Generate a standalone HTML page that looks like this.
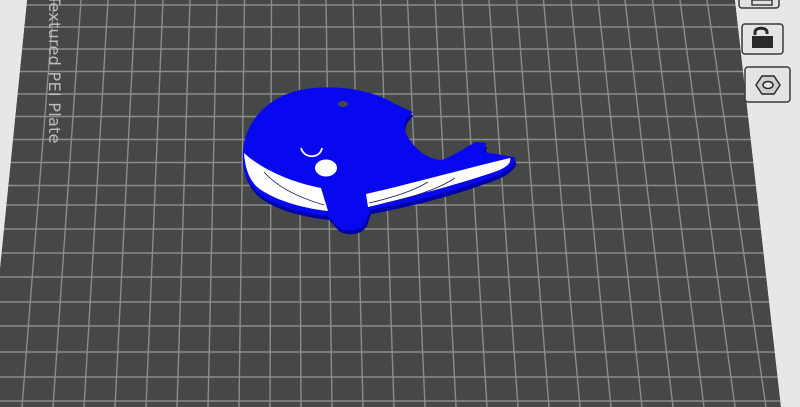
<!DOCTYPE html>
<html><head><meta charset="utf-8"><style>
html,body{margin:0;padding:0;background:#e6e6e6;width:800px;height:407px;overflow:hidden}
svg{position:absolute;left:0;top:0}
</style></head><body>
<svg width="800" height="407" viewBox="0 0 800 407" xmlns="http://www.w3.org/2000/svg">
<defs>
<path id="wb" d="M243,160 C241,125 265,98 300,90 C330,84 370,88 395,104 L413,112 C406,117 403,124 405,131 C412,148 428,160 442,160 C455,155 466,147 476,142 L486,143 L484,152 L514,157 C518,160 512,168 500,174 C460,190 410,203 370,210 L366,222 C360,232 345,232 338,227 L328,216 C300,213 270,205 255,190 C246,180 243,170 243,160 Z"/>
</defs>
<rect width="800" height="407" fill="#e7e7e7"/>
<polygon points="27,0 735,0 781,407 -14,407" fill="#464747"/>
<g stroke="#8c8c8c" stroke-width="1.4">
<line x1="-20" y1="5" x2="820" y2="5"/>
<line x1="-20" y1="27" x2="820" y2="27"/>
<line x1="-20" y1="49" x2="820" y2="49"/>
<line x1="-20" y1="71.5" x2="820" y2="71.5"/>
<line x1="-20" y1="94" x2="820" y2="94"/>
<line x1="-20" y1="116.5" x2="820" y2="116.5"/>
<line x1="-20" y1="139.5" x2="820" y2="139.5"/>
<line x1="-20" y1="162.5" x2="820" y2="162.5"/>
<line x1="-20" y1="185.5" x2="820" y2="185.5"/>
<line x1="-20" y1="205" x2="820" y2="205"/>
<line x1="-20" y1="229" x2="820" y2="229"/>
<line x1="-20" y1="253" x2="820" y2="253"/>
<line x1="-20" y1="277" x2="820" y2="277"/>
<line x1="-20" y1="302" x2="820" y2="302"/>
<line x1="-20" y1="326" x2="820" y2="326"/>
<line x1="-20" y1="352" x2="820" y2="352"/>
<line x1="-20" y1="377" x2="820" y2="377"/>
<line x1="-20" y1="401" x2="820" y2="401"/>
<line x1="54" y1="0" x2="22" y2="407"/>
<line x1="81" y1="0" x2="53" y2="407"/>
<line x1="108" y1="0" x2="84" y2="407"/>
<line x1="135.5" y1="0" x2="115" y2="407"/>
<line x1="163" y1="0" x2="146" y2="407"/>
<line x1="190" y1="0" x2="177" y2="407"/>
<line x1="217" y1="0" x2="208" y2="407"/>
<line x1="244.5" y1="0" x2="239" y2="407"/>
<line x1="271.5" y1="0" x2="270" y2="407"/>
<line x1="299" y1="0" x2="301" y2="407"/>
<line x1="326" y1="0" x2="332" y2="407"/>
<line x1="353" y1="0" x2="363" y2="407"/>
<line x1="380.5" y1="0" x2="394" y2="407"/>
<line x1="407.5" y1="0" x2="425" y2="407"/>
<line x1="435" y1="0" x2="456" y2="407"/>
<line x1="462" y1="0" x2="487" y2="407"/>
<line x1="489" y1="0" x2="518" y2="407"/>
<line x1="516.5" y1="0" x2="549" y2="407"/>
<line x1="543.5" y1="0" x2="580" y2="407"/>
<line x1="571" y1="0" x2="611" y2="407"/>
<line x1="598" y1="0" x2="642" y2="407"/>
<line x1="625" y1="0" x2="673" y2="407"/>
<line x1="652.5" y1="0" x2="704" y2="407"/>
<line x1="680" y1="0" x2="735" y2="407"/>
<line x1="707" y1="0" x2="766" y2="407"/>
</g>
<polygon points="735,0 800,0 800,407 781,407" fill="#e7e7e7"/>
<polygon points="-20,0 27,0 -14,407 -20,407" fill="#e7e7e7"/>
<text transform="translate(49,-5) rotate(90)" font-family="DejaVu Sans, sans-serif" font-size="16" fill="#bdbdbd" letter-spacing="0.3">Textured PEI Plate</text>

<!-- whale side -->
<use href="#wb" transform="translate(1,4)" fill="#0000a8"/>
<!-- whale body -->
<use href="#wb" fill="#0808f0"/>
<!-- belly -->
<path d="M244,153 C258,166 285,181 321,188 L328,211 C300,208 272,199 257,187 C249,179 245,168 244,153 Z" fill="#ffffff"/>
<path d="M366,194 C410,184 460,170 510,158 C512,163 505,168 497,171 C460,184 410,197 368,207 Z" fill="#ffffff"/>
<path d="M264,172 C278,188 300,198 324,205" stroke="#1a1a60" stroke-width="0.8" fill="none"/>
<path d="M369,203 C395,197 415,190 428,182" stroke="#1a1a60" stroke-width="0.8" fill="none"/>
<path d="M395,201 C420,195 440,188 455,178" stroke="#1a1a60" stroke-width="0.8" fill="none"/>
<!-- blowhole -->
<ellipse cx="343" cy="104" rx="5" ry="3" fill="#464747"/>
<!-- eye -->
<path d="M301,148 C304,159 320,159 322,148" stroke="#fff" stroke-width="1.8" fill="none"/>
<ellipse cx="326" cy="168" rx="11" ry="8.5" fill="#fff"/>

<!-- right panel icons -->
<rect x="739" y="-12" width="40" height="20" rx="3" fill="#e2e2e2" stroke="#3a3a3a" stroke-width="1.5"/>
<rect x="752" y="0" width="20" height="5" fill="#e2e2e2" stroke="#3a3a3a" stroke-width="1.5"/>
<rect x="742" y="24" width="41" height="30" rx="3" fill="#e4e4e4" stroke="#3a3a3a" stroke-width="1.5"/>
<path d="M755,35 L755,32 C755,27 767,27 767,32 L767,34" stroke="#2a2a2a" stroke-width="3" fill="none"/>
<rect x="752" y="36" width="21" height="12" fill="#2a2a2a"/>
<rect x="745" y="67" width="45" height="35" rx="3" fill="#e4e4e4" stroke="#3a3a3a" stroke-width="1.5"/>
<polygon points="756,85 762,76 774,76 780,85 774,94 762,94" fill="#cfcfcf" stroke="#2a2a2a" stroke-width="1.5"/>
<ellipse cx="768" cy="85" rx="5" ry="3.5" fill="#e4e4e4" stroke="#2a2a2a" stroke-width="1.5"/>
</svg>
</body></html>
